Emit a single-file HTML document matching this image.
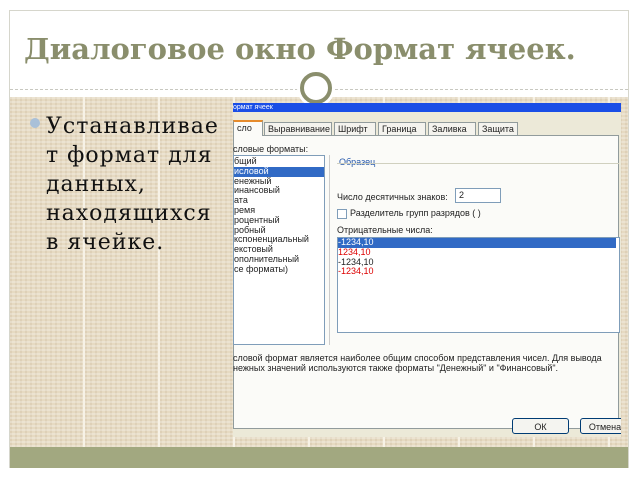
<!DOCTYPE html>
<html><head><meta charset="utf-8"><style>
body{margin:0;width:640px;height:480px;background:#fff;position:relative;overflow:hidden;font-family:"Liberation Sans",sans-serif}
.a{position:absolute}
.frame{left:9px;top:10px;width:620px;height:458px;border:1px solid #d6d6cc;box-sizing:border-box;background:#fff}
.beige{left:10px;top:97px;width:618px;height:350px;background:#e6dac2;
background-image:repeating-linear-gradient(90deg,transparent 0 73px,#f7f2e6 73px 75px),repeating-linear-gradient(0deg,rgba(255,255,255,.25) 0 2px,transparent 2px 4px),repeating-linear-gradient(90deg,rgba(200,180,150,.25) 0 2px,transparent 2px 5px)}
.olive{left:10px;top:447px;width:618px;height:21px;background:#a2a880}
h1{position:absolute;left:24px;top:32px;margin:0;font:bold 29px "DejaVu Serif",serif;color:#8a8e6c;white-space:nowrap}
.dash{left:10px;top:89px;width:618px;border-top:1px dashed #c8c8c0}
.circ{left:300px;top:72px;width:32px;height:32px;border-radius:50%;border:4px solid #8a8e6c;background:#fff;box-sizing:border-box;box-shadow:0 0 0 3px #fff}
.txt{left:46px;top:112px;width:190px;font:22px/29px "DejaVu Serif",serif;letter-spacing:1px;color:#111;white-space:nowrap}
.bul{left:30px;top:118px;width:10px;height:10px;border-radius:50%;background:#a9c0d8}
.dlg{left:233px;top:103px;width:388px;height:334px;background:#ece9d8;font-size:9px;color:#222;overflow:hidden}
.tb{left:0;top:0;width:388px;height:9px;background:#1a4ee6;color:#fff;font-size:7px;line-height:9px}
.tab{top:19px;height:13px;border:1px solid #919b9c;border-bottom:none;background:#f4f3ee;line-height:13px;padding:0 3px;box-sizing:border-box;white-space:nowrap}
.pane{left:0;top:32px;width:386px;height:294px;background:#fbfbf8;border:1px solid #919b9c;box-sizing:border-box}
.list{left:0;top:52px;width:92px;height:190px;background:#fff;border:1px solid #7f9db9;box-sizing:border-box;line-height:9.8px;padding-top:1px;white-space:nowrap}
.sel{background:#316ac5;color:#fff}
.neg{left:104px;top:134px;width:283px;height:96px;background:#fff;border:1px solid #7f9db9;box-sizing:border-box;line-height:9.8px}
.btn{top:315px;height:16px;border:1px solid #003c74;border-radius:3px;background:#f4f4f0;text-align:center;line-height:16px;box-sizing:border-box}
</style></head><body>
<div class="a frame"></div>
<h1>Диалоговое окно Формат ячеек.</h1>
<div class="a dash"></div>
<div class="a beige"></div>
<div class="a olive"></div>
<div class="a circ"></div>
<div class="a bul"></div>
<div class="a txt">Устанавливае<br>т формат для<br>данных,<br>находящихся<br>в ячейке.</div>
<div class="a dlg">
 <div class="a tb">ормат ячеек</div>
 <div class="a pane"></div>
 <div class="a tab" style="left:0;width:30px;top:17px;height:16px;background:#fbfbf8;border-top:2px solid #e68b2c">сло</div>
 <div class="a tab" style="left:31px;width:68px">Выравнивание</div>
 <div class="a tab" style="left:101px;width:42px">Шрифт</div>
 <div class="a tab" style="left:145px;width:48px">Граница</div>
 <div class="a tab" style="left:195px;width:48px">Заливка</div>
 <div class="a tab" style="left:245px;width:40px">Защита</div>
 <div class="a" style="left:0;top:41px">словые форматы:</div>
 <div class="a list"><div>бщий</div><div class="sel">исловой</div><div>енежный</div><div>инансовый</div><div>ата</div><div>ремя</div><div>роцентный</div><div>робный</div><div>кспоненциальный</div><div>екстовый</div><div>ополнительный</div><div>се форматы)</div></div>
 <div class="a" style="left:92px;top:52px;width:4px;height:190px;border-right:1px solid #ccc"></div>
 <div class="a" style="left:106px;top:54px;color:#2255aa">Образец</div>
 <div class="a" style="left:104px;top:60px;width:282px;border-top:1px solid #d0d0bf"></div>
 <div class="a" style="left:104px;top:89px">Число десятичных знаков:</div>
 <div class="a" style="left:222px;top:85px;width:46px;height:15px;background:#fff;border:1px solid #7f9db9;box-sizing:border-box;padding-left:3px;line-height:13px">2</div>
 <div class="a" style="left:104px;top:106px;width:8px;height:8px;border:1px solid #7f9db9;background:#fff"></div>
 <div class="a" style="left:117px;top:105px">Разделитель групп разрядов ( )</div>
 <div class="a" style="left:104px;top:122px">Отрицательные числа:</div>
 <div class="a neg"><div class="sel" style="width:278px">-1234,10</div><div style="color:#d00">1234,10</div><div>-1234,10</div><div style="color:#d00">-1234,10</div></div>
 <div class="a" style="left:0;top:250px;width:400px;line-height:10px;white-space:nowrap">словой формат является наиболее общим способом представления чисел. Для вывода<br>нежных значений используются также форматы "Денежный" и "Финансовый".</div>
 <div class="a btn" style="left:279px;width:57px">ОК</div>
 <div class="a btn" style="left:347px;width:50px">Отмена</div>
</div>
</body></html>
